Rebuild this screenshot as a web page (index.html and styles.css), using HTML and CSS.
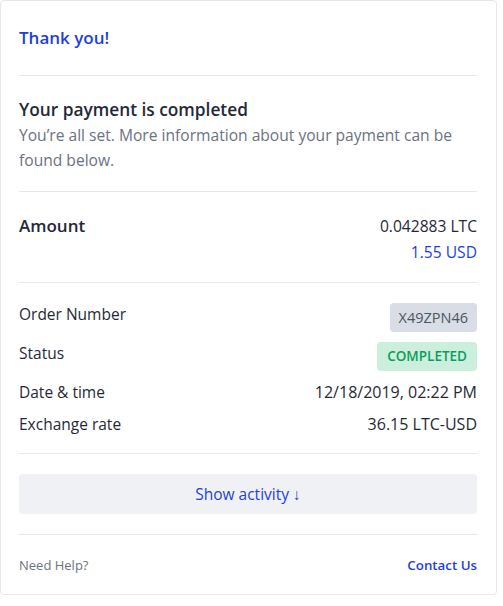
FILE: index.html
```html
<!DOCTYPE html>
<html>
<head>
<meta charset="utf-8">
<link rel="stylesheet" href="styles.css">
</head>
<body>
<div class="card">
  <div class="section head">
    <div class="thanks">Thank you!</div>
  </div>
  <div class="section intro">
    <div class="title">Your payment is completed</div>
    <p class="sub">You’re all set. More information about your payment can be found below.</p>
  </div>
  <div class="section amount">
    <div class="label-lg">Amount</div>
    <div class="values">
      <div class="crypto">0.042883 LTC</div>
      <div class="fiat">1.55 USD</div>
    </div>
  </div>
  <div class="section details">
    <div class="row">
      <div class="label">Order Number</div>
      <div class="badge gray">X49ZPN46</div>
    </div>
    <div class="row">
      <div class="label">Status</div>
      <div class="badge green">COMPLETED</div>
    </div>
    <div class="row">
      <div class="label">Date &amp; time</div>
      <div class="value">12/18/2019, 02:22 PM</div>
    </div>
    <div class="row">
      <div class="label">Exchange rate</div>
      <div class="value">36.15 LTC-USD</div>
    </div>
  </div>
  <div class="section action">
    <button class="activity">Show activity ↓</button>
  </div>
  <div class="section footer">
    <div class="help">Need Help?</div>
    <div class="contact">Contact Us</div>
  </div>
</div>
</body>
</html>
```

FILE: styles.css
```css
* { box-sizing: border-box; }
body {
  margin: 0;
  background: #ffffff;
  font-family: "Open Sans", "Noto Sans", sans-serif;
  color: #1f2937;
}
.card {
  width: 497px;
  height: 595px;
  border: 1px solid #e5e7eb;
  border-radius: 4px;
  background: #fff;
  padding: 0 19px 0 18px;
}
.section {
  border-bottom: 1px solid #e5e7eb;
}
.section:last-child { border-bottom: none; }
.head {
  height: 75px;
  display: flex;
  align-items: center;
  padding-bottom: 1px;
}
.thanks {
  color: #1d3fe0;
  font-size: 17px;
  font-weight: 600;
}
.intro {
  padding: 22px 0 18px;
}
.title {
  font-size: 17.3px;
  font-weight: 600;
  line-height: 24px;
}
.sub {
  margin: 1px 0 0;
  color: #6b7280;
  font-size: 15.6px;
  line-height: 25px;
}
.amount {
  display: flex;
  justify-content: space-between;
  align-items: flex-start;
  padding: 21px 0 17px;
}
.label-lg {
  font-size: 17px;
  font-weight: 600;
  line-height: 26px;
}
.values { text-align: right; font-size: 15.6px; line-height: 26px; }
.crypto { color: #1f2937; }
.fiat { color: #1d3fe0; }
.details {
  padding: 20px 0 18px;
  display: flex;
  flex-direction: column;
  gap: 10px;
}
.row {
  display: flex;
  justify-content: space-between;
  align-items: flex-start;
  line-height: 22px;
}
.label { color: #1f2937; font-size: 15.5px; }
.value { color: #1f2937; font-size: 16px; }
.badge {
  height: 29px;
  line-height: 29px;
  padding: 0 9px;
  border-radius: 4px;
  font-size: 14.5px;
}
.badge.gray { background: #d9dee6; color: #4b5563; }
.badge.green { background: #ccefdd; color: #0a9c5b; font-weight: 600; font-size: 13.5px; padding: 0 10px; }
.action {
  padding: 20px 0;
}
.activity {
  display: block;
  width: 100%;
  height: 40px;
  border: none;
  border-radius: 4px;
  background: #f0f1f5;
  color: #1d3fe0;
  font-family: inherit;
  font-size: 15.5px;
}
.footer {
  display: flex;
  justify-content: space-between;
  align-items: center;
  height: 59px;
}
.help { color: #6b7280; font-size: 13px; }
.contact { color: #1d3fe0; font-size: 13.3px; font-weight: 600; }
```
